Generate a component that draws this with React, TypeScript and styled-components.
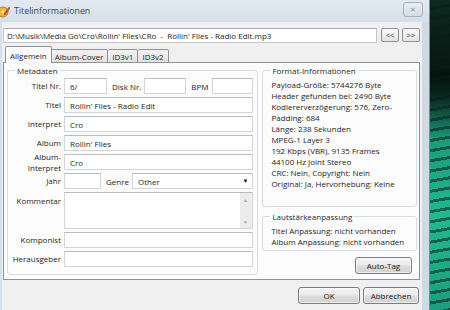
import styled, { createGlobalStyle } from 'styled-components';

const GlobalStyle = createGlobalStyle`
  html, body {
    margin: 0;
    padding: 0;
    width: 450px;
    height: 310px;
    overflow: hidden;
  }
  body {
    font-family: "Open Sans", "Liberation Sans", sans-serif;
    font-size: 8px;
    color: #1e1e1e;
  }
`;

const formatLines = [
  'Payload-Größe: 5744276 Byte',
  'Header gefunden bei: 2490 Byte',
  'Kodiererverzögerung: 576, Zero-',
  'Padding: 684',
  'Länge: 238 Sekunden',
  'MPEG-1 Layer 3',
  '192 Kbps (VBR), 9135 Frames',
  '44100 Hz Joint Stereo',
  'CRC: Nein, Copyright: Nein',
  'Original: Ja, Hervorhebung: Keine',
];

const gainLines = ['Titel Anpassung: nicht vorhanden', 'Album Anpassung: nicht vorhanden'];

const tabs = ['Allgemein', 'Album-Cover', 'ID3v1', 'ID3v2'];

function AppIcon() {
  return (
    <svg width="12" height="13" viewBox="0 0 12 13">
      <circle cx="5" cy="7" r="5" fill="#f3b43a" stroke="#b06d10" strokeWidth="0.8" />
      <circle cx="5" cy="7" r="1.4" fill="#fff3c9" />
      <path d="M6 9 L11 2 L12 3 L7 10 Z" fill="#e2582a" stroke="#7a2c10" strokeWidth="0.5" />
    </svg>
  );
}

export default function App() {
  return (
    <>
      <GlobalStyle />
      <Desktop>
        <Window>
          <TitleBar>
            <IconSlot>
              <AppIcon />
            </IconSlot>
            <Caption>Titelinformationen</Caption>
            <CloseButton>✕</CloseButton>
          </TitleBar>
          <Client>
            <PathRow>
              <PathField>D:\Musik\Media Go\Cro\Rollin' Flies\CRo&nbsp; - &nbsp;Rollin' Flies - Radio Edit.mp3</PathField>
              <NavButton>&lt;&lt;</NavButton>
              <NavButton>&gt;&gt;</NavButton>
            </PathRow>

            <TabStrip>
              {tabs.map((t, i) => (
                <Tab key={t} $active={i === 0}>{t}</Tab>
              ))}
            </TabStrip>

            <TabPanel>
              <Group $width={252}>
                <Legend>Metadaten</Legend>
                <FormGrid>
                  <Label>Titel Nr.</Label>
                  <InlineRow>
                    <TextBox $width={43}>6/</TextBox>
                    <InlineLabel>Disk Nr.</InlineLabel>
                    <TextBox $width={42} />
                    <InlineLabel>BPM</InlineLabel>
                    <TextBox $width={41} />
                  </InlineRow>

                  <Label>Titel</Label>
                  <TextBox>Rollin' Flies - Radio Edit</TextBox>

                  <Label>Interpret</Label>
                  <TextBox>Cro</TextBox>

                  <Label>Album</Label>
                  <TextBox>Rollin' Flies</TextBox>

                  <Label $tight>Album-<br />Interpret</Label>
                  <TextBox>Cro</TextBox>

                  <Label>Jahr</Label>
                  <InlineRow>
                    <TextBox $width={37} />
                    <InlineLabel>Genre</InlineLabel>
                    <ComboBox>
                      <span>Other</span>
                      <ComboArrow>▼</ComboArrow>
                    </ComboBox>
                  </InlineRow>

                  <Label $top>Kommentar</Label>
                  <MemoBox>
                    <MemoText />
                    <ScrollTrack>
                      <ScrollArrow>▲</ScrollArrow>
                      <ScrollArrow>▼</ScrollArrow>
                    </ScrollTrack>
                  </MemoBox>

                  <Label>Komponist</Label>
                  <TextBox />

                  <Label>Herausgeber</Label>
                  <TextBox />
                </FormGrid>
              </Group>

              <SideColumn>
                <Group>
                  <Legend>Format-Informationen</Legend>
                  <InfoText $bottom={17}>
                    {formatLines.map((l) => (
                      <div key={l}>{l}</div>
                    ))}
                  </InfoText>
                </Group>
                <Group>
                  <Legend>Lautstärkeanpassung</Legend>
                  <InfoText $bottom={3}>
                    {gainLines.map((l) => (
                      <div key={l}>{l}</div>
                    ))}
                  </InfoText>
                </Group>
                <ButtonRow>
                  <PushButton $width={57}>Auto-Tag</PushButton>
                </ButtonRow>
              </SideColumn>
            </TabPanel>

            <Footer>
              <PushButton $width={62}>OK</PushButton>
              <PushButton $width={56}>Abbrechen</PushButton>
            </Footer>
          </Client>
        </Window>
        <Wallpaper />
      </Desktop>
    </>
  );
}

const Desktop = styled.div`
  display: flex;
  width: 450px;
  height: 310px;
  background: #0b1712;
`;

const Window = styled.div`
  width: 430px;
  height: 310px;
  display: flex;
  flex-direction: column;
  background: linear-gradient(to right, #d6e0ea, #cfdae5);
  box-sizing: border-box;
  border-right: 1px solid #7d8a96;
`;

const TitleBar = styled.div`
  height: 22px;
  display: flex;
  align-items: center;
  padding: 0 6px 0 0;
  background: linear-gradient(to bottom, #e3eaf1, #d5dfe9);
`;

const IconSlot = styled.div`
  width: 12px;
  height: 13px;
  margin-left: -2px;
  display: flex;
`;

const Caption = styled.div`
  margin-left: 4px;
  font-size: 8.8px;
  color: #3c4653;
  flex: 1;
`;

const CloseButton = styled.div`
  width: 18px;
  height: 13px;
  margin-top: -3px;
  border: 1px solid #a4b1bf;
  border-radius: 3px;
  background: linear-gradient(to bottom, #e8eef4, #d3dde7);
  color: #8b97a3;
  font-size: 7px;
  display: flex;
  align-items: center;
  justify-content: center;
`;

const Client = styled.div`
  flex: 1;
  background: #f0f0f0;
  margin: 0 7px 0 2px;
  padding: 5px 0 0 1px;
  display: flex;
  flex-direction: column;
`;

const PathRow = styled.div`
  display: flex;
  align-items: center;
  gap: 3px;
  height: 16px;
  padding-right: 2px;
`;

const PathField = styled.div`
  flex: 1;
  height: 15px;
  box-sizing: border-box;
  border: 1px solid #c3c7cc;
  border-top-color: #a9adb3;
  background: #fff;
  padding: 0 3px;
  display: flex;
  align-items: center;
  white-space: pre;
  font-size: 8px;
  margin-right: 1px;
`;

const NavButton = styled.div`
  width: 18px;
  height: 14px;
  box-sizing: border-box;
  border: 1px solid #8d9298;
  border-radius: 2px;
  background: linear-gradient(to bottom, #fbfbfb, #e2e2e2);
  font-size: 7.5px;
  color: #333;
  display: flex;
  align-items: center;
  justify-content: center;
`;

const TabStrip = styled.div`
  display: flex;
  align-items: flex-end;
  height: 17px;
  margin-top: 3px;
  padding-left: 2px;
`;

const Tab = styled.div<{ $active?: boolean }>`
  height: ${(p) => (p.$active ? 17 : 14)}px;
  box-sizing: border-box;
  padding: 0 4px;
  margin-right: ${(p) => (p.$active ? -1 : 0)}px;
  border: 1px solid #8e9196;
  border-bottom: ${(p) => (p.$active ? 'none' : '1px solid #8e9196')};
  border-left-width: ${(p) => (p.$active ? 1 : 0)}px;
  border-radius: 2px 2px 0 0;
  background: ${(p) => (p.$active ? '#fcfcfc' : 'linear-gradient(to bottom, #f2f2f2, #e3e3e3)')};
  display: flex;
  align-items: center;
  font-size: 8px;
  position: relative;
  z-index: ${(p) => (p.$active ? 1 : 0)};
  &:nth-child(2) {
    border-left-width: 0;
  }
`;

const TabPanel = styled.div`
  display: flex;
  gap: 4px;
  height: 218px;
  box-sizing: border-box;
  margin-right: 2px;
  margin-top: -1px;
  border: 1px solid #8e9196;
  background: #fcfcfc;
  padding: 2px 2px 4px 3px;
`;

const Group = styled.fieldset<{ $width?: number }>`
  margin: 0;
  padding: 0 6px 0 4px;
  border: 1px solid #d5dde3;
  border-radius: 3px;
  width: ${(p) => (p.$width ? `${p.$width}px` : 'auto')};
  box-sizing: border-box;
  min-width: 0;
`;

const Legend = styled.legend`
  padding: 0 2px;
  margin-left: 3px;
  font-size: 8px;
  color: #2a2a2a;
`;

const FormGrid = styled.div`
  display: grid;
  grid-template-columns: 49px 1fr;
  grid-template-rows: repeat(6, 16px) 37px repeat(2, 16px);
  column-gap: 3px;
  row-gap: 3px;
  margin-top: 2px;
  align-items: center;
`;

const Label = styled.div<{ $tight?: boolean; $top?: boolean }>`
  height: 16px;
  display: flex;
  flex-direction: column;
  justify-content: ${(p) => (p.$top ? 'flex-start' : 'center')};
  align-items: flex-end;
  text-align: right;
  line-height: ${(p) => (p.$tight ? '11px' : '12px')};
  align-self: ${(p) => (p.$top ? 'start' : 'center')};
  margin-top: ${(p) => (p.$top ? 3 : 0)}px;
  white-space: nowrap;
`;

const InlineRow = styled.div`
  display: flex;
  align-items: center;
  height: 16px;
`;

const InlineLabel = styled.div`
  margin: 0 3px 0 5px;
  white-space: nowrap;
  flex: none;
`;

const TextBox = styled.div<{ $width?: number }>`
  height: 16px;
  width: ${(p) => (p.$width ? `${p.$width}px` : 'auto')};
  flex: ${(p) => (p.$width ? 'none' : 1)};
  min-width: 0;
  box-sizing: border-box;
  border: 1px solid #d2d5d9;
  border-top-color: #b9bdc2;
  background: #fff;
  padding: 0 5px;
  display: flex;
  align-items: center;
  white-space: nowrap;
`;

const ComboBox = styled(TextBox)`
  justify-content: space-between;
  padding-right: 3px;
`;

const ComboArrow = styled.span`
  font-size: 6px;
  color: #111;
`;

const MemoBox = styled.div`
  height: 37px;
  display: flex;
  box-sizing: border-box;
  border: 1px solid #d2d5d9;
  border-top-color: #b9bdc2;
  background: #fff;
`;

const MemoText = styled.div`
  flex: 1;
`;

const ScrollTrack = styled.div`
  width: 12px;
  background: #ececec;
  display: flex;
  flex-direction: column;
  justify-content: space-between;
  align-items: center;
  padding: 4px 0 3px;
`;

const ScrollArrow = styled.span`
  font-size: 5px;
  color: #a8a8a8;
`;

const SideColumn = styled.div`
  width: 155px;
  display: flex;
  flex-direction: column;
  gap: 4px;
`;

const InfoText = styled.div<{ $bottom: number }>`
  padding: 3px 0 ${(p) => p.$bottom}px 4px;
  line-height: 11px;
  white-space: nowrap;
`;

const ButtonRow = styled.div`
  display: flex;
  justify-content: flex-end;
  padding-right: 5px;
  margin-top: 2px;
`;

const PushButton = styled.div<{ $width: number }>`
  width: ${(p) => p.$width}px;
  height: 17px;
  box-sizing: border-box;
  border: 1px solid #7a7e84;
  border-radius: 3px;
  background: linear-gradient(to bottom, #f6f6f6 0%, #e9e9e9 48%, #dcdcdc 52%, #d3d3d3 100%);
  display: flex;
  align-items: center;
  justify-content: center;
  box-shadow: inset 0 0 0 1px rgba(255, 255, 255, 0.6);
`;

const Footer = styled.div`
  display: flex;
  justify-content: flex-end;
  gap: 3px;
  padding: 7px 3px 0 0;
`;

const Wallpaper = styled.div`
  flex: 1;
  background:
    repeating-linear-gradient(170deg, rgba(0, 0, 0, 0) 0 7px, rgba(5, 30, 22, 0.55) 7px 10px),
    linear-gradient(to bottom, #0d2a1f 0%, #06130e 25%, #0a2c22 32%, #1b9b7a 45%, #22b892 70%, #1c9e7e 100%);
`;
